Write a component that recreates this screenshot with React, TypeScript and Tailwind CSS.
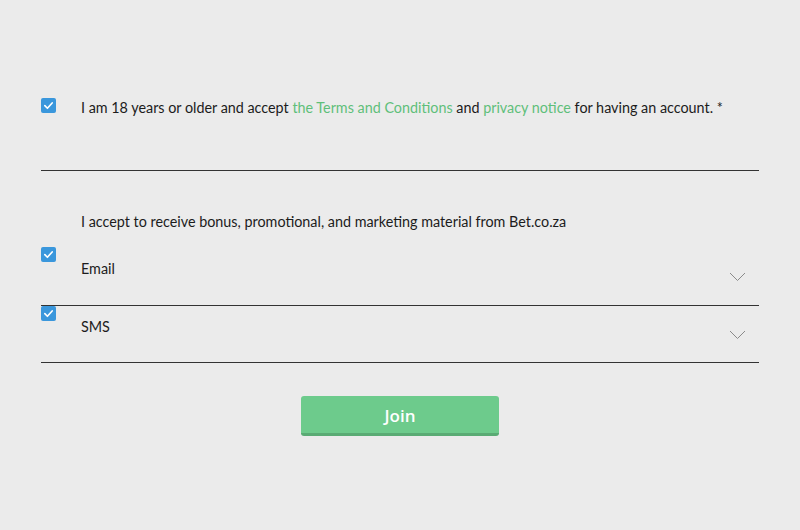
import React, { useState } from 'react'

const font = { fontFamily: '"Lato", "Noto Sans", sans-serif' }

function Check({ checked, onChange }: { checked: boolean; onChange: () => void }) {
  return (
    <button
      onClick={onChange}
      className="w-[15px] h-[15px] rounded-[2px] bg-[#3a97dc] flex items-center justify-center shrink-0"
    >
      {checked && (
        <svg width="11" height="11" viewBox="0 0 12 12" fill="none">
          <path d="M2 6.2 L4.8 9 L10 3.2" stroke="#fff" strokeWidth="1.8" strokeLinecap="round" strokeLinejoin="round" />
        </svg>
      )}
    </button>
  )
}

function Chevron() {
  return (
    <svg width="17" height="10" viewBox="0 0 17 10" fill="none">
      <path d="M1 1 L8.5 8.5 L16 1" stroke="#8a8a8a" strokeWidth="1" />
    </svg>
  )
}

export default function App() {
  const [terms, setTerms] = useState(true)
  const [email, setEmail] = useState(true)
  const [sms, setSms] = useState(true)

  return (
    <div className="w-[800px] h-[530px] bg-[#ebebeb] text-[#1c1c1c] text-[14.35px]" style={font}>
      <div className="px-[41px] pt-[98px]">
        {/* Terms */}
        <div className="flex items-start h-[73px] border-b border-[#333]">
          <Check checked={terms} onChange={() => setTerms(!terms)} />
          <p className="ml-[25px] mt-[1px] leading-[18px]">
            I am 18 years or older and accept <span className="text-[#5fbf7a]">the Terms and Conditions</span> and{' '}
            <span className="text-[#5fbf7a]">privacy notice</span> for having an account. *
          </p>
        </div>

        {/* Marketing */}
        <p className="ml-[40px] mt-[42px] leading-[18px]">
          I accept to receive bonus, promotional, and marketing material from Bet.co.za
        </p>

        <div className="mt-[16px] flex items-start h-[59px] border-b border-[#333]">
          <Check checked={email} onChange={() => setEmail(!email)} />
          <div className="flex-1 ml-[25px] mt-[13px] flex justify-between">
            <span className="leading-[18px]">Email</span>
            <div className="mt-[12px] mr-[13px]">
              <Chevron />
            </div>
          </div>
        </div>

        <div className="flex items-start h-[57px] border-b border-[#333]">
          <Check checked={sms} onChange={() => setSms(!sms)} />
          <div className="flex-1 ml-[25px] mt-[12px] flex justify-between">
            <span className="leading-[18px]">SMS</span>
            <div className="mt-[12px] mr-[13px]">
              <Chevron />
            </div>
          </div>
        </div>

        <div className="flex justify-center mt-[33px]">
          <button
            className="w-[198px] h-[40px] rounded-[3px] bg-[#6dcb8c] border-b-[3px] border-[#5aab74] text-white text-[17px] font-semibold pt-[2px]"
            style={{ fontFamily: '"Open Sans", "Noto Sans", sans-serif' }}
          >
            Join
          </button>
        </div>
      </div>
    </div>
  )
}
